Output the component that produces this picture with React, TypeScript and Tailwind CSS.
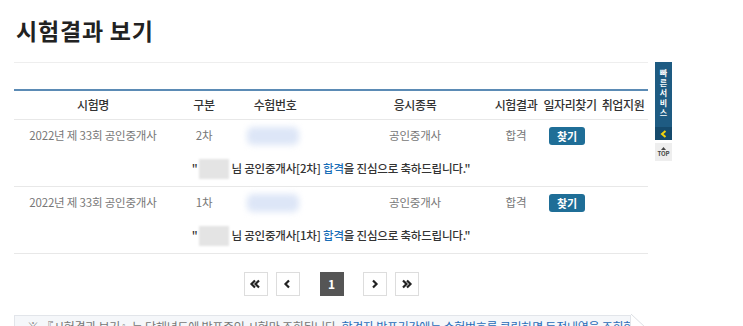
import React from 'react';

const font = { fontFamily: '"Noto Sans CJK KR", "Noto Sans", sans-serif' };

const rows = [
  { name: '2022년 제 33회 공인중개사', round: '2차', subject: '공인중개사', result: '합격' },
  { name: '2022년 제 33회 공인중개사', round: '1차', subject: '공인중개사', result: '합격' },
];

const cols = 'grid grid-cols-[158px_64px_78px_176px_52px_56px_50px]';

const PageBtn: React.FC<{ children: React.ReactNode; active?: boolean }> = ({ children, active }) => (
  <div
    className={`w-6 h-6 flex items-center justify-center border text-[12px] font-bold ${
      active ? 'bg-[#555] border-[#555] text-white' : 'bg-white border-[#ddd] text-[#222]'
    }`}
  >
    {children}
  </div>
);

const Chevron: React.FC<{ dir: 'l' | 'r'; double?: boolean }> = ({ dir, double }) => {
  const one = dir === 'l' ? 'M6 1.5 L2.5 5 L6 8.5' : 'M3 1.5 L6.5 5 L3 8.5';
  const two = dir === 'l' ? 'M10 1.5 L6.5 5 L10 8.5' : 'M7 1.5 L10.5 5 L7 8.5';
  return (
    <svg width={double ? 13 : 9} height="10" viewBox={double ? '0 0 13 10' : '0 0 9 10'}>
      <path d={one} stroke="#222" strokeWidth="2.2" fill="none" />
      {double && <path d={two} stroke="#222" strokeWidth="2.2" fill="none" />}
    </svg>
  );
};

const App: React.FC = () => {
  return (
    <div className="relative w-[743px] h-[326px] overflow-hidden bg-white" style={font}>
      <div className="w-[648px] pl-[14px]">
        <h1 className="pl-[2px] pt-[13px] text-[23px] leading-[34px] font-bold text-[#222] tracking-[0.8px]">
          시험결과 보기
        </h1>
        <div className="mt-[15px] h-px bg-[#eee]" />

        {/* table */}
        <div className="mt-[26px] border-t-2 border-[#5b8bb5]">
          <div className={`${cols} h-[29px] items-center text-[12px] tracking-[-0.4px] font-medium text-[#333] border-b border-[#e8e8e8]`}>
            <div className="text-center">시험명</div>
            <div className="text-center">구분</div>
            <div className="text-center">수험번호</div>
            <div className="text-center pl-[26px]">응시종목</div>
            <div className="text-center whitespace-nowrap">시험결과</div>
            <div className="text-center whitespace-nowrap">일자리찾기</div>
            <div className="text-center whitespace-nowrap">취업지원</div>
          </div>

          {rows.map((r, i) => (
            <div key={i} className="border-b border-[#e8e8e8]">
              <div className={`${cols} h-[31px] items-center text-[11.5px] tracking-[-0.2px] text-[#777]`}>
                <div className="text-center">{r.name}</div>
                <div className="text-center">{r.round}</div>
                <div className="flex justify-center">
                  <div className="w-[52px] h-[18px] -ml-[4px] rounded-[6px] bg-[#dde6f7] blur-[3px]" />
                </div>
                <div className="text-center pl-[26px]">{r.subject}</div>
                <div className="text-center">{r.result}</div>
                <div className="flex justify-center">
                  <button className="w-[36px] h-[18px] -ml-[6px] rounded-[3px] bg-[#1f6e97] text-white text-[11px] font-bold leading-[18px]">
                    찾기
                  </button>
                </div>
                <div />
              </div>
              <div className="h-[35px] flex items-center justify-center text-[11.5px] tracking-[-0.2px] font-medium text-[#333]">
                <span>"</span>
                <span className="inline-block w-[30px] h-[20px] mx-[2px] bg-[#e4e4e4] blur-[1px]" />
                <span>
                  님 공인중개사[{r.round}] <span className="text-[#1a6fb8]">합격</span>을 진심으로 축하드립니다."
                </span>
              </div>
            </div>
          ))}
        </div>

        {/* pagination */}
        <div className="mt-[18px] flex justify-center items-center">
          <PageBtn><Chevron dir="l" double /></PageBtn>
          <div className="w-2" />
          <PageBtn><Chevron dir="l" /></PageBtn>
          <div className="w-5" />
          <PageBtn active>1</PageBtn>
          <div className="w-[19px]" />
          <PageBtn><Chevron dir="r" /></PageBtn>
          <div className="w-2" />
          <PageBtn><Chevron dir="r" double /></PageBtn>
        </div>

        {/* notice */}
        <div className="relative mt-[19px] w-[617px] h-[30px] bg-[#f5f7fa] border border-[#e2e5ea] pl-[12px] pt-[2px] text-[12px] tracking-[-0.25px] text-[#777] whitespace-nowrap overflow-hidden">
          ※ 『시험결과 보기』는 당해년도에 발표중인 시험만 조회됩니다.{' '}
          <span className="text-[#2a6db8]">합격자 발표기간에는 수험번호를 클릭하면 득점내역을 조회할 수</span>
        </div>
      </div>

      {/* corner fold next to notice */}
      <svg className="absolute left-[630px] top-[314px]" width="20" height="14" viewBox="0 0 20 14">
        <path d="M1 0 L16 14" stroke="#dcdfe4" strokeWidth="1" fill="none" />
      </svg>

      {/* quick menu */}
      <div className="absolute left-[655px] top-[62px] w-[17px] flex flex-col">
        <div className="bg-[#1e5b82] h-[65px] flex flex-col items-center pt-[6px] text-white text-[8px] font-bold leading-[10px]">
          <span>빠</span>
          <span>른</span>
          <span>서</span>
          <span>비</span>
          <span>스</span>
        </div>
        <div className="bg-[#154a6c] h-[13px] flex items-center justify-center">
          <svg width="7" height="8" viewBox="0 0 7 8">
            <path d="M5.5 1 L2 4 L5.5 7" stroke="#f2d30c" strokeWidth="2" fill="none" />
          </svg>
        </div>
        <div className="mt-[3px] bg-[#eeeeee] h-[18px] flex flex-col items-center justify-center text-[#444]">
          <svg width="5" height="3" viewBox="0 0 5 3">
            <path d="M0 3 L2.5 0 L5 3 Z" fill="#444" />
          </svg>
          <span className="text-[6px] font-bold leading-[8px]">TOP</span>
        </div>
      </div>
    </div>
  );
};

export default App;
